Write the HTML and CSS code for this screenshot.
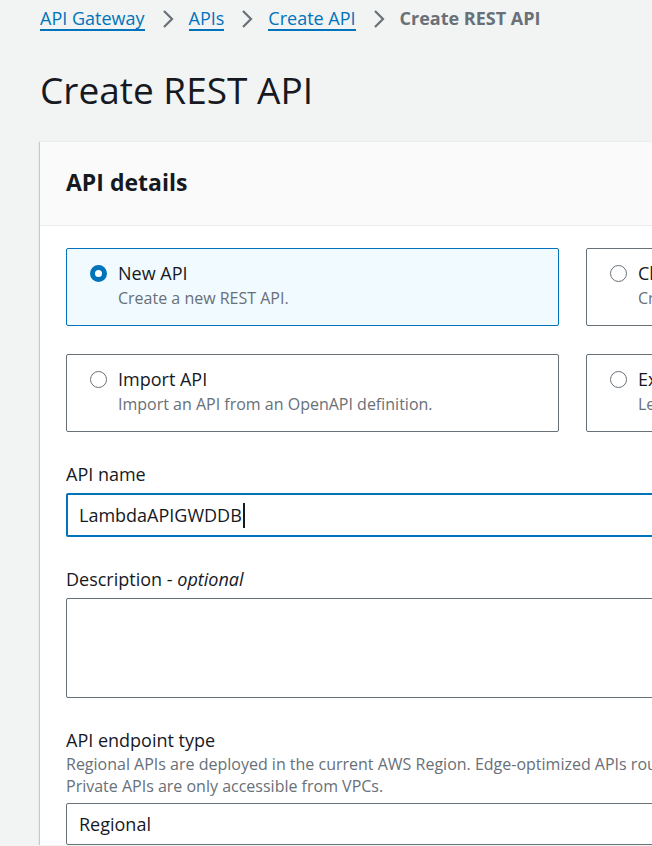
FILE: index.html
```html
<!DOCTYPE html>
<html lang="en">
<head>
<meta charset="utf-8">
<title>Create REST API</title>
<link rel="stylesheet" href="styles.css">
</head>
<body>
<div class="page">
  <nav class="crumbs">
    <a class="crumb-link" href="#">API Gateway</a>
    <svg class="chev" viewBox="0 0 12 20" width="12" height="20"><path d="M2 2l8 8-8 8" fill="none" stroke="#687078" stroke-width="2.2"/></svg>
    <a class="crumb-link" href="#">APIs</a>
    <svg class="chev" viewBox="0 0 12 20" width="12" height="20"><path d="M2 2l8 8-8 8" fill="none" stroke="#687078" stroke-width="2.2"/></svg>
    <a class="crumb-link" href="#">Create API</a>
    <svg class="chev" viewBox="0 0 12 20" width="12" height="20"><path d="M2 2l8 8-8 8" fill="none" stroke="#687078" stroke-width="2.2"/></svg>
    <span class="crumb-current">Create REST API</span>
  </nav>
  <h1 class="title">Create REST API</h1>
  <section class="card">
    <header class="card-head"><h2>API details</h2></header>
    <div class="card-body">
      <div class="tiles">
        <div class="tile selected">
          <span class="radio checked"></span>
          <div class="tile-text"><div class="tile-title">New API</div><div class="tile-desc">Create a new REST API.</div></div>
        </div>
        <div class="tile">
          <span class="radio"></span>
          <div class="tile-text"><div class="tile-title">Clone existing API</div><div class="tile-desc">Create a copy of an API in this AWS account.</div></div>
        </div>
        <div class="tile">
          <span class="radio"></span>
          <div class="tile-text"><div class="tile-title">Import API</div><div class="tile-desc">Import an API from an OpenAPI definition.</div></div>
        </div>
        <div class="tile">
          <span class="radio"></span>
          <div class="tile-text"><div class="tile-title">Example API</div><div class="tile-desc">Learn about API Gateway with an example API.</div></div>
        </div>
      </div>
      <div class="field first">
        <label class="label">API name</label>
        <div class="input focused">LambdaAPIGWDDB<span class="caret"></span></div>
      </div>
      <div class="field">
        <label class="label">Description - <i>optional</i></label>
        <div class="textarea"></div>
      </div>
      <div class="field last">
        <label class="label">API endpoint type</label>
        <p class="help">Regional APIs are deployed in the current AWS Region. Edge-optimized APIs route requests to the nearest CloudFront Point of Presence.<br>Private APIs are only accessible from VPCs.</p>
        <div class="select">Regional</div>
      </div>
    </div>
  </section>
</div>
</body>
</html>
```
FILE: styles.css
```css
html, body {
  margin: 0;
  padding: 0;
  background: #f2f3f3;
  overflow: hidden;
}
body {
  font-family: "Open Sans", "Liberation Sans", sans-serif;
  color: #16191f;
}
.page {
  width: 1100px;
  padding: 0 0 0 40px;
}
.crumbs {
  display: flex;
  align-items: center;
  height: 38px;
  font-size: 18px;
  white-space: nowrap;
}
.crumb-link {
  color: #0073bb;
  text-decoration: none;
  border-bottom: 2px solid #0073bb;
  line-height: 21px;
}
.chev {
  margin: 0 15px 0 17px;
  width: 12px;
  height: 20px;
}
.crumb-current {
  color: #687078;
  font-weight: 700;
  line-height: 21px;
  padding-bottom: 2px;
}
.title {
  margin: 0;
  font-size: 37px;
  font-weight: 400;
  line-height: 44px;
  padding: 30px 0 29px;
}
.card {
  background: #fff;
  box-shadow: 0 1px 1px 0 rgba(0,28,36,0.3), 1px 1px 1px 0 rgba(0,28,36,0.15), -1px 1px 1px 0 rgba(0,28,36,0.15);
  border-top: 1px solid #eaeded;
}
.card-head {
  box-sizing: border-box;
  background: #fafafa;
  border-bottom: 1px solid #eaeded;
  height: 84px;
  display: flex;
  align-items: center;
  padding: 0 0 3px 26px;
}
.card-head h2 {
  margin: 0;
  font-size: 23px;
  font-weight: 700;
}
.card-body {
  padding: 22px 26px 0;
}
.tiles {
  display: grid;
  grid-template-columns: 493px 493px;
  column-gap: 27px;
  row-gap: 28px;
}
.tile {
  box-sizing: border-box;
  height: 78px;
  border: 1px solid #687078;
  border-radius: 2px;
  display: flex;
  align-items: flex-start;
  padding: 13px 0 0 23px;
  white-space: nowrap;
  overflow: hidden;
}
.tile.selected {
  border-color: #0073bb;
  background: #f1faff;
}
.radio {
  box-sizing: border-box;
  flex: none;
  width: 17px;
  height: 17px;
  border-radius: 50%;
  border: 1px solid #687078;
  background: #fff;
  margin: 3px 11px 0 0;
}
.radio.checked {
  border: 5px solid #0073bb;
}
.tile-title {
  font-size: 18px;
  line-height: 22px;
}
.tile-desc {
  font-size: 16px;
  line-height: 22px;
  color: #687078;
  margin-top: 3px;
}
.field {
  padding-top: 31px;
}
.field.first {
  padding-top: 31px;
}
.field.last {
  padding-top: 31px;
}
.label {
  display: block;
  font-size: 18px;
  line-height: 22px;
  margin-bottom: 8px;
}
.input, .textarea, .select {
  box-sizing: border-box;
  border: 1px solid #687078;
  border-radius: 2px;
  background: #fff;
  width: 1000px;
  font-size: 18px;
  padding: 0 12px;
  display: flex;
  align-items: center;
}
.input {
  height: 44px;
}
.input.focused {
  border: 2px solid #0073bb;
  padding-left: 11px;
}
.caret {
  display: inline-block;
  width: 2px;
  height: 25px;
  background: #16191f;
  margin-left: 1px;
}
.textarea {
  height: 100px;
}
.help {
  margin: -6px 0 6px;
  font-size: 16px;
  line-height: 22px;
  color: #687078;
  white-space: nowrap;
}
.select {
  height: 42px;
}
```
